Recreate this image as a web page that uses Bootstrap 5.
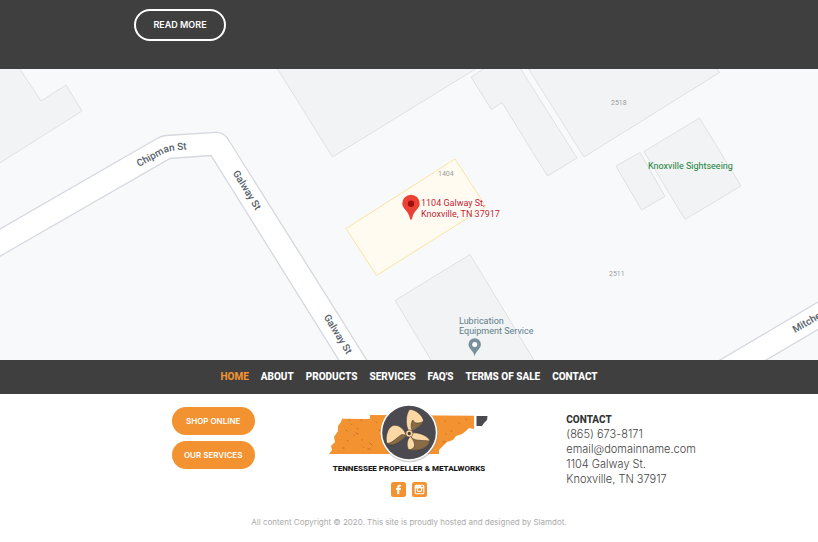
<!DOCTYPE html>
<html lang="en">
<head>
<meta charset="utf-8">
<meta name="viewport" content="width=device-width, initial-scale=1">
<title>Tennessee Propeller &amp; Metalworks</title>
<link href="https://cdn.jsdelivr.net/npm/bootstrap@5.3.0/dist/css/bootstrap.min.css" rel="stylesheet">
<style>
body { font-family: Inter, "Open Sans", sans-serif; color: #444; background: #fff; }
.bg-charcoal { background: #3f3f3f; }
.intro-band { padding: 9px 134px 28px; }
.btn-pill { border-radius: 16px; font-size: 8px; line-height: 12px; font-weight: 600; white-space: nowrap; }
.btn-read, .btn-read:hover { border: 2px solid #fff; color: #fff; padding: 8px 0; width: 92px; font-size: 9px; }
.btn-orange, .btn-orange:hover { background: #f29230; color: #fff; padding: 8px 0; width: 83px; border: 0; }
.buttons-col { padding: 13px 18px 0 0; }
.buttons-stack { gap: 6px; }
.map-art { font-family: Roboto, sans-serif; font-size: 9px; background: #f8f9fb; }
.headline-font { font-family: "Liberation Sans Narrow", Roboto, sans-serif; font-weight: 800; }
.site-nav { gap: 12px; padding: 9px 0; font-size: 10px; line-height: 16px; }
.site-nav a { color: #fff; text-decoration: none; }
.site-nav a.active { color: #f29230; }
.brand-col { padding-top: 9px; }
.brand-art { width: 164px; }
.brand-name { font-size: 8px; line-height: 12px; color: #161616; white-space: nowrap; }
.socials { gap: 6px; margin-top: 7px; }
.socials svg { width: 15px; height: 15px; }
.contact-col { padding: 18px 0 0 21px; font-size: 11px; line-height: 15px; font-weight: 300; }
.contact-col h2 { font-size: 10px; line-height: 15px; color: #333; }
.contact-col address { line-height: 15px; }
.contact-col a { color: inherit; text-decoration: none; }
.copyright { font-size: 8px; line-height: 12px; color: #aaa; padding: 19px 0 13px; }
</style>
<script src="https://cdn.jsdelivr.net/npm/bootstrap@5.3.0/dist/js/bootstrap.bundle.min.js"></script>
</head>
<body>
<section class="bg-charcoal intro-band">
  <button type="button" class="btn btn-pill btn-read">READ MORE</button>
</section>

<main>
<svg class="map-art d-block w-100" viewBox="0 69 818 291" role="img" aria-label="Map of 1104 Galway St, Knoxville">
  <g fill="#f1f3f4" stroke="#dfe1e5">
    <path d="M-5 60H14L41 101 66 85 82 111-5 166Z"/>
    <path d="M272 60 332.500 157 490 60Z"/>
    <path d="M497 60 471 77 491.500 109.500 502 102.500 547.500 176 577 158 515 60Z"/>
    <path d="M523 60 584 157 719.500 72.500 711 60Z"/>
    <path d="M616 166 640 152.500 665 196.500 641.500 210Z"/>
    <path d="M644 151.500 699.500 118 741 186 685 219.500Z"/>
    <path d="M395 300.500 470 254.500 540 370H437Z"/>
  </g>
  <path d="M346 228.500 455 159 486 206.500 376.500 275.500Z" fill="#fffbf0" stroke="#fbe3a3"/>
  <path d="M-5 232 157 138.500Q161 136 166 135.500L216 132.300Q223 132 228 139L373 370H345L211 155.500 170 158.500-5 259Z" fill="#fff" stroke="#d6d8df" stroke-width="1.300"/>
  <path d="M703 370 830 295V322.500L749 370Z" fill="#fff" stroke="#d6d8df" stroke-width="1.300"/>
  <defs>
    <path id="chipman" d="M139 167 161 155Q168 151 175 150.500L200 148"/>
    <path id="galway-north" d="M232.500 173 267 229"/>
    <path id="galway-south" d="M323.500 317 358 373"/>
    <path id="mitchell" d="M795 333 840 307"/>
  </defs>
  <g fill="#55616a" font-size="10" font-weight="500">
    <text><textPath href="#chipman">Chipman St</textPath></text>
    <text><textPath href="#galway-north">Galway St</textPath></text>
    <text><textPath href="#galway-south">Galway St</textPath></text>
    <text><textPath href="#mitchell">Mitchell St</textPath></text>
  </g>
  <g fill="#9a9da1" font-size="7">
    <text x="438" y="176">1404</text>
    <text x="611" y="105">2518</text>
    <text x="609" y="276">2511</text>
  </g>
  <text x="648" y="169" fill="#188038">Knoxville Sightseeing</text>
  <g fill="#c5221f" stroke="#fff" stroke-width="1.500" paint-order="stroke">
    <text x="421" y="206">1104 Galway St,</text>
    <text x="421" y="217">Knoxville, TN 37917</text>
  </g>
  <g fill="#607d8b">
    <text x="459" y="324">Lubrication</text>
    <text x="459" y="334">Equipment Service</text>
  </g>
  <path d="M411 220Q410 220 409.500 217C408.500 211 402.300 209 402.300 203.500A8.700 8.700 0 0 1 419.700 203.500C419.700 209 413.500 211 412.500 217Q412 220 411 220Z" fill="#ea4335"/>
  <circle cx="411" cy="203.700" r="3.200" fill="#a50e0e"/>
  <path d="M474.700 356.500C474 351 468.500 349 468.500 344.500A6.200 6.200 0 0 1 480.900 344.500C480.900 349 475.400 351 474.700 356.500Z" fill="#78909c"/>
  <circle cx="474.700" cy="344.500" r="2.500" fill="#fff"/>
</svg>
</main>

<nav class="bg-charcoal" aria-label="Footer">
  <div class="site-nav headline-font d-flex flex-wrap justify-content-center">
    <a href="#" class="active" aria-current="page">HOME</a>
    <a href="#">ABOUT</a>
    <a href="#">PRODUCTS</a>
    <a href="#">SERVICES</a>
    <a href="#">FAQ'S</a>
    <a href="#">TERMS OF SALE</a>
    <a href="#">CONTACT</a>
  </div>
</nav>

<footer>
  <div class="row g-0">
    <div class="col-4 buttons-col">
      <div class="buttons-stack d-flex flex-column align-items-end">
        <button type="button" class="btn btn-pill btn-orange">SHOP ONLINE</button>
        <button type="button" class="btn btn-pill btn-orange">OUR SERVICES</button>
      </div>
    </div>
    <div class="col-4 brand-col d-flex flex-column align-items-center">
      <svg class="brand-art" viewBox="327 403 164 60" role="img" aria-label="Tennessee Propeller logo">
        <path d="M342 418.700 370 419V415L440 415.500 474 415.800V429L469 428 466 431 462 434 456 436 453 440 447 442 443 446 439 450V454H329L332 450 331 446 335 442 334 437 338 431 338 426 341 422Z" fill="#f29230"/>
        <g fill="none" stroke="#ad6423" stroke-width="1" stroke-linecap="round" opacity=".75">
          <path d="M346 430l1 1M351 424l.5.500M347 440l1 1M354 435l.5 0M361 420l.5 1M357 428l1 1M356 433l2 1M370 443l2 2M368 449l2 0M379 430l2 2M382 435l1 2M376 422l.5.500M343 448l1 0M362 440l.5 0M445 421l.5.500M451 431l1 0M459 423l.5.500M466 419l.5 1M443 442l2 0M446 434l.5.500M363 447l.5.500M349 420l.5 0"/>
        </g>
        <path d="M476.500 416H487.500L487 420 484 423 482 426H476.500Z" fill="#4b4a50"/>
        <circle cx="409.300" cy="433.500" r="28.800" fill="#888" opacity=".4"/>
        <circle cx="409" cy="432.500" r="28.400" fill="#fff"/>
        <circle cx="409" cy="432.500" r="26.800" fill="#4b4a50"/>
        <g stroke="#33302f" stroke-width=".5" stroke-linejoin="round">
          <path d="M408.500 430.500C405.500 425 405.500 415 409.500 409.500C415 409 423.500 416 423.500 421C422 426 416 428 411.500 431Z" fill="#fbd8a4"/>
          <path d="M412 430C410 426 412 420 413 420C414 423.500 418 424 423.300 421.500C421 426 416 427 412 430Z" fill="#8b6b43"/>
          <path d="M405.500 433.500C403 428 398 424.500 393 425.500C387 428 385 438 387 443.500C391 447 399 444 406 435.500Z" fill="#fbd8a4"/>
          <path d="M387 443.500C393 443 397 437 402 434.500L405.500 435C399 444 392 447 387 443.500Z" fill="#8b6b43"/>
          <path d="M412 433C419 432 428 436 430 441C428 448 419 452 409 450C406 446 407 440 410 436.500Z" fill="#fbd8a4"/>
          <path d="M411 437C414 441 420 440 430 441C427 449 418 451 409 450C418 448 414 441 411 437Z" fill="#8b6b43"/>
          <circle cx="409.300" cy="433.500" r="3.600" fill="#fbd8a4"/>
        </g>
        <circle cx="409.300" cy="433.500" r="1.700" fill="#51402d"/>
      </svg>
      <div class="brand-name headline-font">TENNESSEE PROPELLER &amp; METALWORKS</div>
      <div class="socials d-flex">
        <a href="#" class="d-flex" aria-label="Facebook"><svg viewBox="0 0 15 15"><rect width="15" height="15" rx="2.500" fill="#f29230"/><path d="M6.300 12.200V8H5V6H6.300V5C6.300 3.300 7.200 2.700 8.600 2.700H9.900V4.600H9C8.500 4.600 8.300 4.800 8.300 5.300V6H9.900L9.700 8H8.300V12.200Z" fill="#fff"/></svg></a>
        <a href="#" class="d-flex" aria-label="Instagram"><svg viewBox="0 0 15 15"><rect width="15" height="15" rx="2.500" fill="#f29230"/><rect x="3.200" y="3.200" width="8.600" height="8.600" rx="1" fill="none" stroke="#fff" stroke-width="1.100"/><path d="M3 3H12V6.300H3Z" fill="#fff"/><rect x="9.300" y="3.700" width="1.700" height="1.500" fill="#f29230"/><circle cx="7.500" cy="7.500" r="2.200" fill="#f29230" stroke="#fff" stroke-width="1.200"/></svg></a>
      </div>
    </div>
    <div class="col-4 contact-col">
      <h2 class="headline-font mb-0">CONTACT</h2>
      <address class="mb-0">
        <a href="tel:8656738171">(865) 673-8171</a><br>
        <a href="mailto:email@domainname.com">email@domainname.com</a><br>
        1104 Galway St.<br>
        Knoxville, TN 37917
      </address>
    </div>
  </div>
  <p class="copyright text-center mb-0">All content Copyright © 2020. This site is proudly hosted and designed by Slamdot.</p>
</footer>
</body>
</html>
